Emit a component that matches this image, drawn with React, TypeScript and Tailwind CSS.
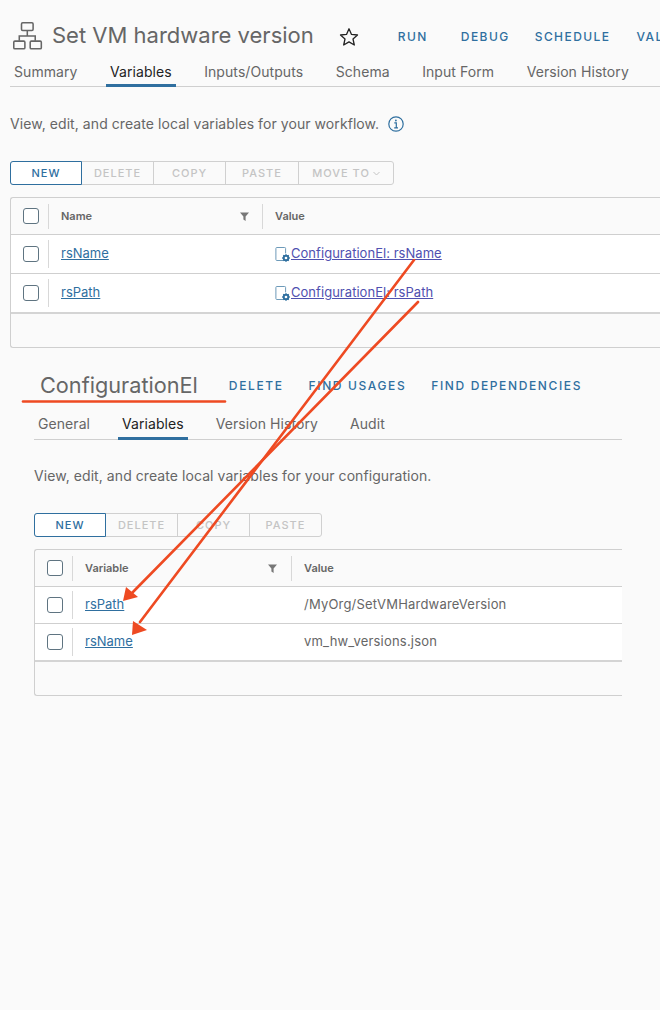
const FONT = "font-['Inter','Liberation_Sans',sans-serif]";

function WorkflowIcon() {
  return (
    <svg width="31" height="29" viewBox="0 0 32 30" fill="none" stroke="#666" strokeWidth="1.6" className="shrink-0">
      <rect x="9.8" y="1.8" width="12" height="8" rx="1.2" />
      <rect x="1.8" y="20.8" width="11.5" height="8" rx="1.2" />
      <rect x="18.8" y="20.8" width="11.5" height="8" rx="1.2" />
      <path d="M15.8 10v5.5M7.5 20.5v-5h16.5v5" />
    </svg>
  );
}

function Star() {
  return (
    <svg width="20" height="20" viewBox="0 0 20 20" fill="none" stroke="#222" strokeWidth="1.3" strokeLinejoin="round">
      <path d="M10 1.8l2.5 5.6 6 .6-4.5 4 1.3 6-5.3-3.1-5.3 3.1 1.3-6-4.5-4 6-.6z" />
    </svg>
  );
}

function Info() {
  return (
    <svg width="16" height="16" viewBox="0 0 16 16" fill="none" stroke="#2f6f9f" strokeWidth="1.2">
      <circle cx="8" cy="8" r="7.2" />
      <path d="M6.3 6.8H8.3V11.6M6.2 11.8H10" />
      <circle cx="7.9" cy="4.5" r="0.9" fill="#2f6f9f" stroke="none" />
    </svg>
  );
}

function Funnel() {
  return (
    <svg width="9" height="9" viewBox="0 0 9 9" fill="#777">
      <path d="M0 .5h9L5.6 4.4V9L3.4 7.6V4.4z" />
    </svg>
  );
}

function ConfigIcon() {
  return (
    <svg width="15" height="15" viewBox="0 0 15 15" fill="none" className="shrink-0">
      <path d="M8 13.5H1.8a.9.9 0 0 1-.9-.9V1.4A.9.9 0 0 1 1.8.5h7.9a.9.9 0 0 1 .9.9v5" stroke="#6d9ab9" strokeWidth="1" />
      <circle cx="11" cy="11" r="2.3" stroke="#2f6f9f" strokeWidth="1.9" />
      <path d="M11 7.2v1.4M11 13.4v1.4M7.2 11h1.4M13.4 11h1.4M8.3 8.3l1 1M12.7 12.7l1 1M13.7 8.3l-1 1M9.3 12.7l-1 1" stroke="#2f6f9f" strokeWidth="1.3" />
    </svg>
  );
}

function Check() {
  return <span className="block w-[16px] h-[16px] rounded-[3px] border border-[#5f7481] bg-white" />;
}

function Tabs({ items, active, gap, cls, h }: { items: string[]; active: string; gap: string; cls: string; h: string }) {
  return (
    <div className={`flex border-b border-[#cfcfcf] ${h} ${cls} ${gap}`}>
      {items.map((t) => (
        <div
          key={t}
          className={`px-[4px] pt-[5px] ${h} text-[14px] leading-[20px] tracking-[0.005em] whitespace-nowrap ${
            t === active ? "text-[#222] border-b-[3px] border-[#2f6f9f]" : "text-[#666]"
          }`}
        >
          {t}
        </div>
      ))}
    </div>
  );
}

function Buttons({ items, widths }: { items: string[]; widths: string[] }) {
  return (
    <div className="flex h-[24px] rounded-[3px] border border-[#d0d0d0] w-fit">
      {items.map((b, i) => (
        <div
          key={b}
          className={`${widths[i]} -my-[1px] flex items-center justify-center gap-[3px] text-[11px] font-medium tracking-[0.09em] whitespace-nowrap ${
            i === 0
              ? "-ml-[1px] rounded-l-[3px] border border-[#2f6f9f] text-[#2f6f9f] bg-white"
              : i === items.length - 1
                ? "text-[#c4c4c4]"
                : "text-[#c4c4c4] border-r border-[#d0d0d0]"
          }`}
        >
          {b.replace(" ▾", "")}
          {b.endsWith("▾") && (
            <svg width="7" height="5" viewBox="0 0 7 5" fill="none" stroke="#c4c4c4" strokeWidth="1">
              <path d="M.5 1l3 3 3-3" />
            </svg>
          )}
        </div>
      ))}
    </div>
  );
}

type Row = { name: string; value: React.ReactNode };

function Table({
  head,
  rows,
  rowH,
  lastH,
  nameW,
  namePr,
  cls,
}: {
  head: string;
  rows: Row[];
  rowH: string;
  lastH: string;
  nameW: string;
  namePr: string;
  cls: string;
}) {
  return (
    <div className={`${cls} rounded-l-[3px] border border-r-0 border-[#cfcfcf] overflow-hidden`}>
      <div className="flex items-center h-[37px] border-b border-[#cfcfcf]">
        <div className="w-[38px] pl-[12px] border-r border-[#d8d8d8] h-[25px] flex items-center">
          <Check />
        </div>
        <div className={`flex items-center justify-between ${nameW} pl-[12px] ${namePr} border-r border-[#d8d8d8] h-[25px]`}>
          <span className="text-[11px] font-semibold text-[#666]">{head}</span>
          <Funnel />
        </div>
        <span className="pl-[12px] text-[11px] font-semibold text-[#666]">Value</span>
      </div>
      {rows.map((r, i) => (
        <div
          key={r.name}
          className={`flex items-center bg-white ${i === rows.length - 1 ? `${lastH} border-b-2 border-[#d4d4d4]` : `${rowH} border-b border-[#cfcfcf]`}`}
        >
          <div className="w-[38px] pl-[12px] border-r border-[#d8d8d8] h-[28px] flex items-center">
            <Check />
          </div>
          <div className={`${nameW} pl-[12px] text-[13px]`}>
            <a className="text-[#2f6f9f] underline">{r.name}</a>
          </div>
          <div className="pl-[12px] text-[13px] tracking-[0.015em] text-[#666] whitespace-nowrap">{r.value}</div>
        </div>
      ))}
    </div>
  );
}

function ConfigLink({ text }: { text: string }) {
  return (
    <span className="flex items-center">
      <ConfigIcon />
      <a className="ml-[1px] text-[13px] tracking-[0.003em] text-[#4f50b0] underline">{text}</a>
    </span>
  );
}

function Arrows() {
  return (
    <svg width="660" height="1010" viewBox="0 0 660 1010" className="absolute left-0 top-0 pointer-events-none">
      <g stroke="#ee4a22" strokeWidth="2.6" fill="none" strokeLinecap="round">
        <path d="M414 260L140 622" />
        <path d="M418 302L131 594" />
        <path d="M23 401.5H225" />
      </g>
      <path d="M123 601L126 587L138 597Z" fill="#ee4a22" />
      <path d="M132 635L133 621L147 630Z" fill="#ee4a22" />
    </svg>
  );
}

const ACTION = "mt-[3px] text-[12px] font-medium tracking-[0.12em] text-[#2f6f9f]";
const ACTION2 = "mt-[2px] text-[12px] font-medium tracking-[0.135em] text-[#2f6f9f]";

export default function App() {
  return (
    <div className={`relative w-[660px] h-[1010px] overflow-hidden bg-[#fafafa] ${FONT}`}>
      <div className="flex items-center h-[57px] pt-[13px] pl-[12px] whitespace-nowrap">
        <WorkflowIcon />
        <h1 className="ml-[9px] text-[22px] leading-[28px] text-[#666] font-normal">Set VM hardware version</h1>
        <span className="ml-[25px] mt-[4px]">
          <Star />
        </span>
        <span className={`ml-[39px] ${ACTION}`}>RUN</span>
        <span className={`ml-[33px] ${ACTION}`}>DEBUG</span>
        <span className={`ml-[25px] ${ACTION}`}>SCHEDULE</span>
        <span className={`ml-[26px] ${ACTION}`}>VALIDATE</span>
      </div>

      <Tabs
        items={["Summary", "Variables", "Inputs/Outputs", "Schema", "Input Form", "Version History"]}
        active="Variables"
        gap="gap-[24.5px]"
        cls="ml-[10px]"
        h="h-[30px]"
      />

      <div className="flex items-center ml-[10px] mt-[26px] h-[20px]">
        <p className="text-[14px] tracking-[0.005em] text-[#666]">View, edit, and create local variables for your workflow.</p>
        <span className="ml-[9px] mt-[2px]">
          <Info />
        </span>
      </div>

      <div className="ml-[10px] mt-[28px]">
        <Buttons
          items={["NEW", "DELETE", "COPY", "PASTE", "MOVE TO ▾"]}
          widths={["w-[72px]", "w-[72px]", "w-[72px]", "w-[73px]", "w-[94px]"]}
        />
      </div>

      <Table
        cls="ml-[10px] mt-[12px] h-[151px]"
        head="Name"
        rowH="h-[39px]"
        lastH="h-[40px]"
        nameW="w-[214px]"
        namePr="pr-[13px]"
        rows={[
          { name: "rsName", value: <ConfigLink text="ConfigurationEl: rsName" /> },
          { name: "rsPath", value: <ConfigLink text="ConfigurationEl: rsPath" /> },
        ]}
      />

      <div className="flex items-center ml-[40px] mt-[22px] h-[30px] whitespace-nowrap">
        <h2 className="text-[21.7px] leading-[30px] text-[#666] font-normal">ConfigurationEl</h2>
        <span className={`ml-[31px] ${ACTION2}`}>DELETE</span>
        <span className={`ml-[25px] ${ACTION2}`}>FIND USAGES</span>
        <span className={`ml-[25px] ${ACTION2}`}>FIND DEPENDENCIES</span>
      </div>

      <div className="w-[588px] ml-[34px] mt-[9px]">
        <Tabs items={["General", "Variables", "Version History", "Audit"]} active="Variables" gap="gap-[24px]" cls="" h="h-[31px]" />
      </div>

      <p className="ml-[34px] mt-[26px] h-[20px] text-[14px] leading-[20px] tracking-[0.005em] text-[#666]">
        View, edit, and create local variables for your configuration.
      </p>

      <div className="ml-[34px] mt-[27px]">
        <Buttons items={["NEW", "DELETE", "COPY", "PASTE"]} widths={["w-[72px]", "w-[72px]", "w-[72px]", "w-[71px]"]} />
      </div>

      <div className="w-[588px] ml-[34px] mt-[12px]">
        <Table
          cls="h-[147px]"
          head="Variable"
          rowH="h-[37px]"
          lastH="h-[38px]"
          nameW="w-[219px]"
          namePr="pr-[14px]"
          rows={[
            { name: "rsPath", value: "/MyOrg/SetVMHardwareVersion" },
            { name: "rsName", value: "vm_hw_versions.json" },
          ]}
        />
      </div>

      <Arrows />
    </div>
  );
}
